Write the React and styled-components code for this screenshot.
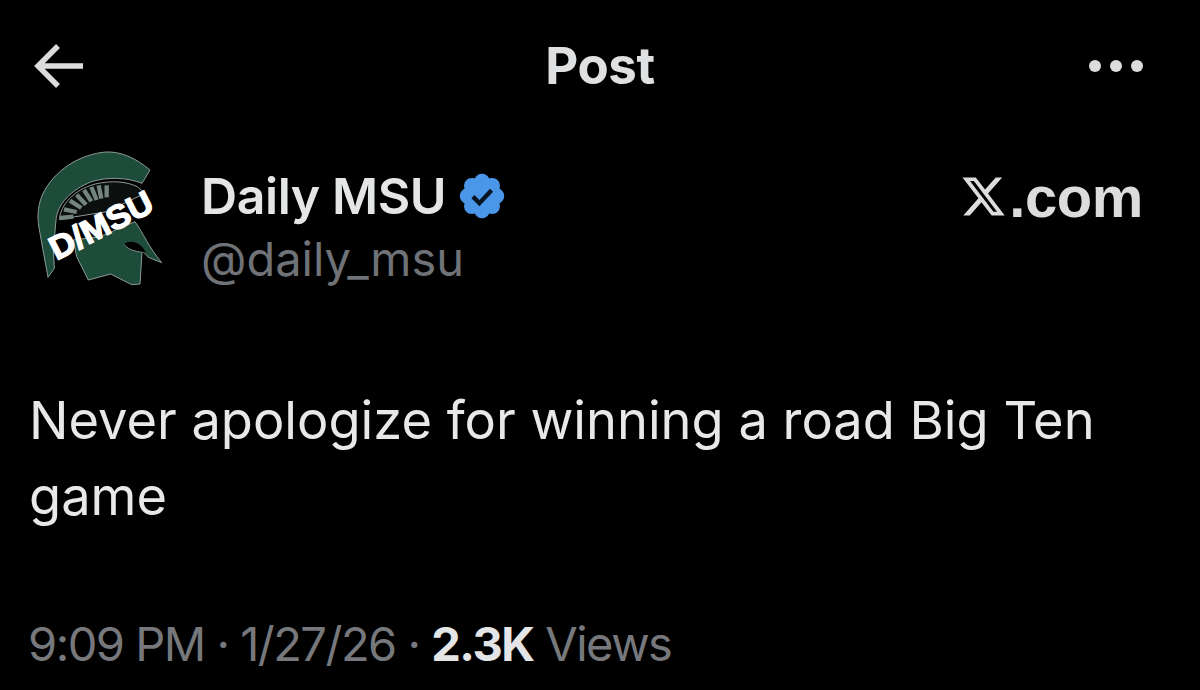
import React from "react";
import styled, { createGlobalStyle } from "styled-components";

const Global = createGlobalStyle`
  html, body { margin: 0; padding: 0; background: #000; }
  #root { width: 1200px; height: 690px; overflow: hidden; }
`;

const Page = styled.main`
  width: 1200px;
  height: 690px;
  background: #000;
  box-sizing: border-box;
  padding: 36px 57px 0 30px;
  font-family: Inter, "Liberation Sans", sans-serif;
  color: #e4e5e6;
  display: flex;
  flex-direction: column;
`;

const TopBar = styled.header`
  height: 60px;
  display: grid;
  grid-template-columns: 1fr auto 1fr;
  align-items: center;
`;

const BackIcon = styled.svg`
  width: 56px;
  height: 46px;
  display: block;
`;

const Title = styled.h1`
  margin: 0 0 0 27px;
  font-size: 51px;
  line-height: 60px;
  font-weight: 700;
  letter-spacing: -0.4px;
  color: #dfe0e1;
`;

const More = styled.div`
  justify-self: end;
  display: flex;
  gap: 9px;
`;

const Dot = styled.span`
  width: 12px;
  height: 12px;
  border-radius: 50%;
  background: #dcdcdc;
`;

const AuthorRow = styled.section`
  margin-top: 52px;
  display: flex;
  align-items: flex-start;
`;

const Logo = styled.svg`
  width: 160px;
  height: 160px;
  margin: -8px 21px 0 -10px;
  flex: none;
`;

const Names = styled.div`
  flex: 1;
  display: flex;
  flex-direction: column;
  padding-top: 21px;
`;

const NameLine = styled.div`
  display: flex;
  align-items: center;
  gap: 10px;
  height: 54px;
`;

const Name = styled.span`
  font-size: 50px;
  font-weight: 600;
  letter-spacing: -0.4px;
  color: #e4e5e6;
`;

const Badge = styled.svg`
  width: 52px;
  height: 52px;
`;

const Handle = styled.span`
  margin-top: 11px;
  font-size: 47px;
  line-height: 50px;
  color: #6f7276;
`;

const Brand = styled.div`
  display: flex;
  align-items: center;
  height: 54px;
  margin-top: 21px;
  color: #dcdcdc;
`;

const BrandMark = styled.svg`
  width: 47px;
  height: 47px;
  margin-right: 2px;
`;

const BrandText = styled.span`
  font-family: "Liberation Sans", Arial, sans-serif;
  font-size: 58px;
  font-weight: 700;
  letter-spacing: -0.4px;
`;

const Body = styled.p`
  margin: 82px 0 0 -1px;
  font-size: 52.4px;
  line-height: 76px;
  font-weight: 400;
  color: #e7e8e9;
`;

const Meta = styled.footer`
  margin: 83px 0 0 -2px;
  font-size: 47px;
  line-height: 54px;
  letter-spacing: -1.5px;
  color: #76787c;
  white-space: nowrap;
`;

const Strong = styled.b`
  font-weight: 700;
  color: #e4e5e6;
`;

function Spartan() {
  return (
    <Logo viewBox="0 0 480 480" aria-hidden="true">
      <path
        d="M390 90C345 52 300 34 258 36C180 42 100 92 67 165C50 205 52 240 60 280L84 412L103 385L100 330L108 240C112 195 150 150 215 125C265 110 320 112 366 130Z"
        fill="#1d4d3a"
        stroke="#8d9a94"
        strokeWidth="3"
      />
      <path
        d="M118 238C122 195 160 150 225 132C280 120 320 125 352 140L375 160L260 215Z"
        fill="#0b0f0d"
        stroke="#8d9a94"
        strokeWidth="3"
      />
      <g stroke="#74857d" strokeWidth="13">
        <path d="M120 234L160 230" />
        <path d="M132 208L170 216" />
        <path d="M150 182L184 204" />
        <path d="M170 164L198 194" />
        <path d="M192 150L214 184" />
        <path d="M214 141L230 180" />
        <path d="M236 136L244 176" />
        <path d="M260 136L260 172" />
      </g>
      <path
        d="M345 245C370 280 385 320 425 368L385 352C370 330 345 320 312 312C325 330 350 335 366 336L360 432L335 434L272 402L205 420L170 350L160 300L240 290Z"
        fill="#1d4d3a"
        stroke="#8d9a94"
        strokeWidth="3"
      />
      <path d="M312 312C330 298 362 304 378 338C358 332 330 332 312 312Z" fill="#000" />
      <text
        x="243"
        y="290"
        transform="rotate(-27 243 255)"
        textAnchor="middle"
        textLength="335"
        lengthAdjust="spacingAndGlyphs"
        fontFamily="Liberation Sans, Arial, sans-serif"
        fontWeight="700"
        fontSize="100"
        fill="#fff"
        stroke="#fff"
        strokeWidth="4"
      >
        D/MSU
      </text>
    </Logo>
  );
}

export default function App() {
  return (
    <Page>
      <Global />
      <TopBar>
        <BackIcon viewBox="0 0 56 46" aria-hidden="true">
          <path d="M8 23H53M28 3L8 23L28 43" fill="none" stroke="#dcdcdc" strokeWidth="5.5" />
        </BackIcon>
        <Title>Post</Title>
        <More>
          <Dot />
          <Dot />
          <Dot />
        </More>
      </TopBar>
      <AuthorRow>
        <Spartan />
        <Names>
          <NameLine>
            <Name>Daily MSU</Name>
            <Badge viewBox="0 0 24 24" aria-hidden="true">
              <path
                d="M22.25 12c0-1.43-.88-2.67-2.19-3.34.46-1.39.2-2.9-.81-3.91s-2.52-1.27-3.91-.81c-.66-1.31-1.91-2.19-3.34-2.19s-2.67.88-3.33 2.19c-1.4-.46-2.91-.2-3.92.81s-1.26 2.52-.8 3.91c-1.31.67-2.2 1.91-2.2 3.34s.89 2.67 2.2 3.34c-.46 1.39-.21 2.9.8 3.91s2.52 1.26 3.91.81c.67 1.31 1.91 2.19 3.34 2.19s2.68-.88 3.34-2.19c1.39.45 2.9.2 3.91-.81s1.27-2.52.81-3.91c1.31-.67 2.19-1.91 2.19-3.34z"
                fill="#4a97ea"
              />
              <path d="M7.8 12.3l3 3 5.6-6" fill="none" stroke="#0a1420" strokeWidth="2" />
            </Badge>
          </NameLine>
          <Handle>@daily_msu</Handle>
        </Names>
        <Brand>
          <BrandMark viewBox="0 0 24 24" aria-hidden="true">
            <path
              d="M18.244 2.25h3.308l-7.227 8.26 8.502 11.24H16.17l-5.214-6.817L4.99 21.75H1.68l7.73-8.835L1.254 2.25H8.08l4.713 6.231zm-1.161 17.52h1.833L7.084 4.126H5.117z"
              fill="currentColor"
            />
          </BrandMark>
          <BrandText>.com</BrandText>
        </Brand>
      </AuthorRow>
      <Body>
        Never apologize for winning a road Big Ten
        <br />
        game
      </Body>
      <Meta>
        9:09 PM · 1/27/26 · <Strong>2.3K</Strong> Views
      </Meta>
    </Page>
  );
}
